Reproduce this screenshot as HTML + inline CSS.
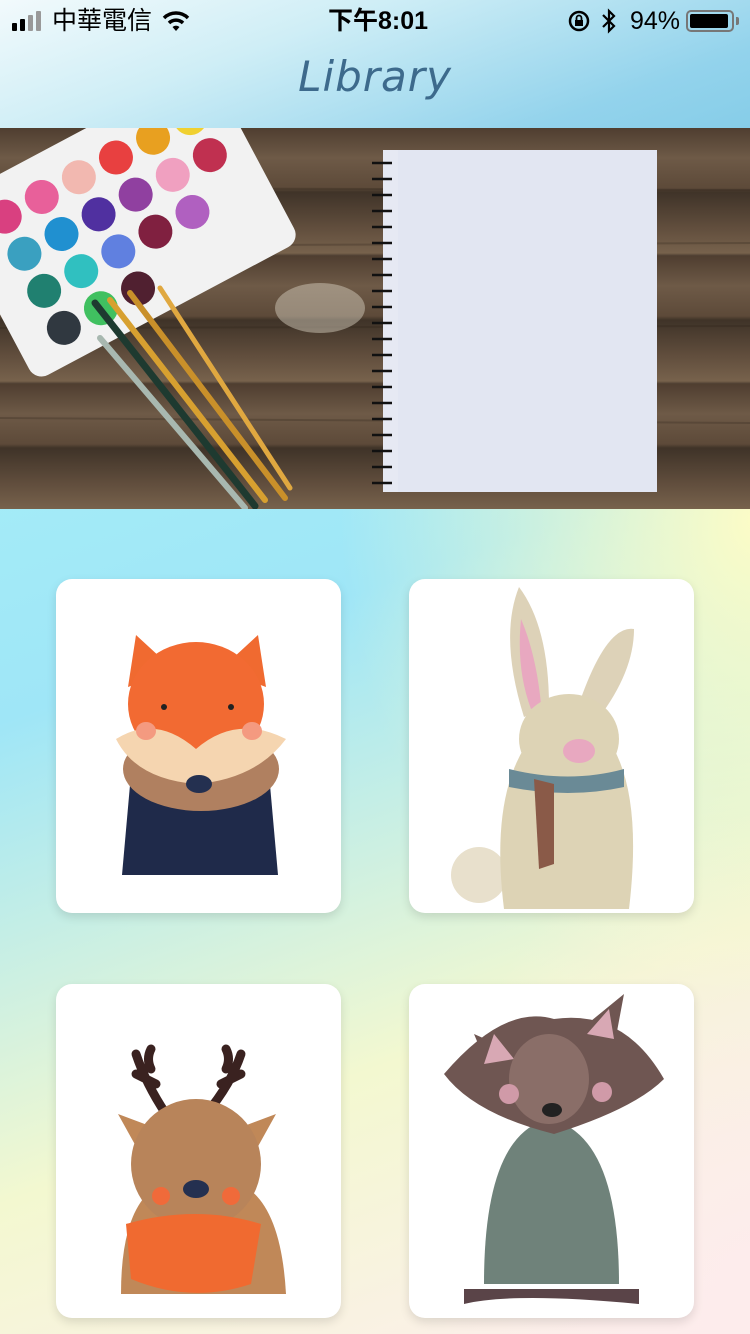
<!DOCTYPE html>
<html><head><meta charset="utf-8"><style>
*{margin:0;padding:0;box-sizing:border-box}
body{width:750px;height:1334px;overflow:hidden;position:relative;font-family:"Liberation Sans","Noto Sans CJK TC",sans-serif;
background:
radial-gradient(ellipse 600px 700px at 760px 520px,#fdfcc6 0%,rgba(253,252,198,0) 70%),
radial-gradient(ellipse 500px 700px at 760px 1300px,#fdecec 0%,rgba(253,236,236,0) 70%),
linear-gradient(160deg,#aef7f8 0%,#9fe6f7 45%,#f3f8d0 75%,#fdeeee 100%);}
.hdr{position:absolute;left:0;top:0;width:750px;height:128px;background:linear-gradient(160deg,#f2fafc 0%,#cfeef6 35%,#93d3ec 80%,#86cde8 100%)}
.sb{position:absolute;top:6px;font-size:25px;color:#000;line-height:30px}
.title{position:absolute;left:0;width:750px;top:52px;text-align:center;font-family:"DejaVu Sans",cursive;font-style:italic;font-size:42px;color:#3d6a8c;letter-spacing:1px}
.hero{position:absolute;left:0;top:128px;width:750px;height:381px;overflow:hidden;
background:repeating-linear-gradient(180deg,#4f3e30 0px,#6e5a47 30px,#5d4a39 60px,#3f3328 64px,#614e3d 100px,#77624c 125px,#4b3c2f 128px)}
.card{position:absolute;width:285px;height:334px;background:#fff;border-radius:16px;box-shadow:0 4px 10px rgba(0,0,0,.12);overflow:hidden}
</style></head><body>
<div class="hdr">
 <div class="sb" style="left:12px;top:7px">
  <svg width="36" height="22" style="vertical-align:-2px"><rect x="0" y="13" width="5" height="8" rx="1"/><rect x="8" y="9" width="5" height="12" rx="1"/><rect x="16" y="5" width="5" height="16" rx="1" fill="#999"/><rect x="24" y="1" width="5" height="20" rx="1" fill="#999"/></svg></div>
 <div class="sb" style="left:52px">中華電信</div>
 <svg style="position:absolute;left:162px;top:10px" width="28" height="22" viewBox="0 0 28 22"><path d="M2 8a17 17 0 0 1 24 0" stroke="#000" stroke-width="3.5" fill="none"/><path d="M7 13a10 10 0 0 1 14 0" stroke="#000" stroke-width="3.5" fill="none"/><path d="M10.5 17l3.5 4 3.5-4a5 5 0 0 0-7 0z"/></svg>
 <div class="sb" style="left:328px;font-weight:bold;font-size:25px">下午8:01</div>
 <svg style="position:absolute;left:568px;top:10px" width="24" height="22"><circle cx="11" cy="11" r="9" stroke="#000" stroke-width="2.5" fill="none"/><rect x="7" y="10" width="8" height="6"/><path d="M8.5 10V8a2.5 2.5 0 0 1 5 0v2" stroke="#000" stroke-width="1.8" fill="none"/></svg>
 <svg style="position:absolute;left:600px;top:8px" width="18" height="26"><path d="M3 7l11 11-5 5V3l5 5L3 19" stroke="#000" stroke-width="2.2" fill="none"/></svg>
 <div class="sb" style="left:630px">94%</div>
 <div style="position:absolute;left:686px;top:10px;width:48px;height:22px;border:2px solid #777;border-radius:5px;padding:2px"><div style="width:38px;height:14px;background:#000;border-radius:2px"></div></div>
 <div style="position:absolute;left:736px;top:17px;width:3px;height:8px;background:#777;border-radius:0 2px 2px 0"></div>
 <div class="title">Library</div>
</div>
<div class="hero">
 <svg width="750" height="381" style="position:absolute;left:0;top:0">
  <g opacity=".25" stroke="#2a2018" stroke-width="2"><line x1="0" y1="118" x2="750" y2="115"/><line x1="0" y1="290" x2="750" y2="295"/><line x1="0" y1="60" x2="750" y2="62"/><line x1="0" y1="200" x2="750" y2="198"/></g>
  <ellipse cx="320" cy="180" rx="45" ry="25" fill="#cfc7b8" opacity=".5"/>
  <g transform="rotate(-28 130 90)"><rect x="-30" y="-10" width="300" height="200" rx="14" fill="#f2f2f2"/>
   <circle cx="20" cy="30" r="17" fill="#d94080"/><circle cx="62" cy="30" r="17" fill="#e8609a"/><circle cx="104" cy="30" r="17" fill="#f2b8b0"/><circle cx="146" cy="30" r="17" fill="#e84040"/><circle cx="188" cy="30" r="17" fill="#e8a020"/><circle cx="230" cy="30" r="17" fill="#f0d030"/>
   <circle cx="20" cy="72" r="17" fill="#3aa0c0"/><circle cx="62" cy="72" r="17" fill="#2090d0"/><circle cx="104" cy="72" r="17" fill="#5030a0"/><circle cx="146" cy="72" r="17" fill="#9040a0"/><circle cx="188" cy="72" r="17" fill="#f0a0c0"/><circle cx="230" cy="72" r="17" fill="#c03050"/>
   <circle cx="20" cy="114" r="17" fill="#208070"/><circle cx="62" cy="114" r="17" fill="#30c0c0"/><circle cx="104" cy="114" r="17" fill="#6080e0"/><circle cx="146" cy="114" r="17" fill="#802040"/><circle cx="188" cy="114" r="17" fill="#b060c0"/>
   <circle cx="20" cy="156" r="17" fill="#303840"/><circle cx="62" cy="156" r="17" fill="#40c060"/><circle cx="104" cy="156" r="17" fill="#502030"/></g>
  <g stroke-linecap="round"><line x1="95" y1="175" x2="255" y2="378" stroke="#1e3a30" stroke-width="7"/><line x1="110" y1="172" x2="265" y2="372" stroke="#d7a030" stroke-width="6"/><line x1="130" y1="165" x2="285" y2="370" stroke="#c9902a" stroke-width="6"/><line x1="160" y1="160" x2="290" y2="360" stroke="#e0a840" stroke-width="5"/><line x1="100" y1="210" x2="245" y2="380" stroke="#a8b8b0" stroke-width="6"/></g>
  <rect x="383" y="22" width="274" height="342" fill="#e6e9f3"/><rect x="398" y="22" width="259" height="342" fill="#e2e6f2"/>
  <g stroke="#111" stroke-width="2.5" fill="none">
   <path d="M372 35h20M372 51h20M372 67h20M372 83h20M372 99h20M372 115h20M372 131h20M372 147h20M372 163h20M372 179h20M372 195h20M372 211h20M372 227h20M372 243h20M372 259h20M372 275h20M372 291h20M372 307h20M372 323h20M372 339h20M372 355h20"/></g>
 </svg>
</div>
<!-- fox -->
<div class="card" style="left:56px;top:579px"><svg width="285" height="334">
 <path d="M66 296l8-90h140l8 90z" fill="#1f2a4a"/>
 <ellipse cx="145" cy="190" rx="78" ry="42" fill="#b08060"/>
 <path d="M72 108l8-52 38 35zM210 108l-8-52-38 35z" fill="#f06a30"/>
 <ellipse cx="140" cy="125" rx="68" ry="62" fill="#f26a32"/>
 <path d="M60 160q40-25 80 10q40-35 90-10q-30 40-90 45q-60-5-80-45z" fill="#f5d5b0"/>
 <ellipse cx="90" cy="152" rx="10" ry="9" fill="#f49a80"/><ellipse cx="196" cy="152" rx="10" ry="9" fill="#f49a80"/>
 <circle cx="108" cy="128" r="3" fill="#222"/><circle cx="175" cy="128" r="3" fill="#222"/>
 <ellipse cx="143" cy="205" rx="13" ry="9" fill="#243050"/>
</svg></div>
<!-- rabbit -->
<div class="card" style="left:409px;top:579px"><svg width="285" height="334">
 <circle cx="70" cy="296" r="28" fill="#e8e0cc"/>
 <path d="M110 8q-20 50 5 130l25 -10q0-80-30-120z" fill="#ddd2b8"/><path d="M112 40q-5 50 10 90l10-5q-5-50-20-85z" fill="#e8a8c0"/>
 <path d="M225 50q-30-5-60 90l20 5q40-50 40-95z" fill="#ddd2b8"/>
 <path d="M95 330q-15-120 30-175q40-10 70 0q40 50 25 175z" fill="#ddd3b5"/>
 <ellipse cx="160" cy="160" rx="50" ry="45" fill="#ddd3b5"/>
 <ellipse cx="170" cy="172" rx="16" ry="12" fill="#e8a8c0"/>
 <path d="M100 190q60 15 115 0v18q-55 12-115 0z" fill="#6a8a96"/><path d="M125 200l20 5v80l-15 5z" fill="#8a5a48"/>
</svg></div>
<!-- deer -->
<div class="card" style="left:56px;top:984px"><svg width="285" height="334">
 <g stroke="#3a2220" stroke-width="9" fill="none" stroke-linecap="round"><path d="M110 130q-20-30-30-60M100 100l-20-10M95 85q-5-10 0-20M150 130q25-30 35-60M165 100l20-10M170 85q5-10 0-20"/></g>
 <path d="M65 310q0-90 40-110h80q40 20 45 110z" fill="#c08858"/>
 <path d="M62 130l40 15-15 30zM220 130l-40 15 15 30z" fill="#c08858"/>
 <ellipse cx="140" cy="180" rx="65" ry="65" fill="#b8845a"/>
 <circle cx="105" cy="212" r="9" fill="#f06a3a"/><circle cx="175" cy="212" r="9" fill="#f06a3a"/>
 <ellipse cx="140" cy="205" rx="13" ry="9" fill="#243050"/>
 <path d="M70 240q70 -20 135 0l-10 60q-60 20-120-5z" fill="#f06a30"/>
</svg></div>
<!-- raccoon -->
<div class="card" style="left:409px;top:984px"><svg width="285" height="334">
 <path d="M55 320q50-12 175 0v-15h-175z" fill="#5a4448"/>
 <path d="M75 300q0-150 65-165q70 15 70 165z" fill="#6f827a"/>
 <path d="M65 50l45 20-20 40zM215 10l-55 45 40 35z" fill="#6f5652"/>
 <path d="M35 90q60-70 110-55q70-10 110 60q-30 30-110 55q-80-20-110-60z" fill="#6f5652"/>
 <path d="M75 80l10-30 20 25zM205 55l-5-30-22 25z" fill="#d8a8b4"/>
 <ellipse cx="140" cy="95" rx="40" ry="45" fill="#8a6e68"/>
 <circle cx="100" cy="110" r="10" fill="#d09aa8"/><circle cx="193" cy="108" r="10" fill="#d09aa8"/>
 <ellipse cx="143" cy="126" rx="10" ry="7" fill="#222"/>
</svg></div>
</body></html>
